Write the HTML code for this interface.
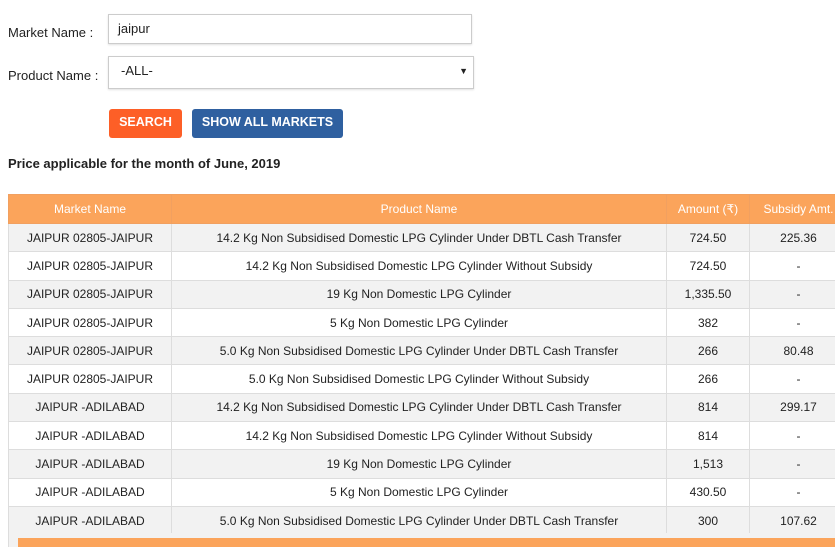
<!DOCTYPE html>
<html><head><meta charset="utf-8"><style>
body{margin:0;background:#fff;font-family:"Liberation Sans",sans-serif;color:#222;width:835px;height:547px;overflow:hidden;position:relative}
.lbl{position:absolute;left:8px;font-size:13px}
.inp{position:absolute;left:108px;width:364px;height:30px;border:1px solid #ccc;box-shadow:0 1px 2px rgba(0,0,0,.12);font-size:13px;box-sizing:border-box;padding-left:9px;line-height:28px}
.btn{position:absolute;top:109px;height:29px;border-radius:3px;color:#fff;font-weight:bold;font-size:12.5px;line-height:26px;text-align:center}
table{position:absolute;left:8px;top:194px;border-collapse:collapse;font-size:12px;width:840px}
th{background:#fba45b;color:#fff;font-weight:normal;height:28px;border:1px solid #f1a060;padding:0}
td{height:27.3px;border:1px solid #ddd;text-align:center;padding:0;color:#222}
tr:nth-child(even) td{background:#f2f2f2}
</style></head><body>
<div class="lbl" style="top:25px">Market Name :</div>
<div class="inp" style="top:14px">jaipur</div>
<div class="lbl" style="top:68px">Product Name :</div>
<div class="inp" style="top:56px;width:366px;height:33px;line-height:28px;padding-left:12px">-ALL-<span style="position:absolute;right:5px;font-size:9px">▼</span></div>
<div class="btn" style="left:109px;width:73px;background:#fd5f27">SEARCH</div>
<div class="btn" style="left:192px;width:151px;background:#2f60a0">SHOW ALL MARKETS</div>
<div style="position:absolute;left:8px;top:156px;font-size:13px;font-weight:bold;color:#222">Price applicable for the month of June, 2019</div>
<table>
<tr><th style="width:162px">Market Name</th><th style="width:494px">Product Name</th><th style="width:82px">Amount (₹)</th><th>Subsidy Amt.</th></tr>
<tr><td>JAIPUR 02805-JAIPUR</td><td>14.2 Kg Non Subsidised Domestic LPG Cylinder Under DBTL Cash Transfer</td><td>724.50</td><td>225.36</td></tr>
<tr><td>JAIPUR 02805-JAIPUR</td><td>14.2 Kg Non Subsidised Domestic LPG Cylinder Without Subsidy</td><td>724.50</td><td>-</td></tr>
<tr><td>JAIPUR 02805-JAIPUR</td><td>19 Kg Non Domestic LPG Cylinder</td><td>1,335.50</td><td>-</td></tr>
<tr><td>JAIPUR 02805-JAIPUR</td><td>5 Kg Non Domestic LPG Cylinder</td><td>382</td><td>-</td></tr>
<tr><td>JAIPUR 02805-JAIPUR</td><td>5.0 Kg Non Subsidised Domestic LPG Cylinder Under DBTL Cash Transfer</td><td>266</td><td>80.48</td></tr>
<tr><td>JAIPUR 02805-JAIPUR</td><td>5.0 Kg Non Subsidised Domestic LPG Cylinder Without Subsidy</td><td>266</td><td>-</td></tr>
<tr><td>JAIPUR -ADILABAD</td><td>14.2 Kg Non Subsidised Domestic LPG Cylinder Under DBTL Cash Transfer</td><td>814</td><td>299.17</td></tr>
<tr><td>JAIPUR -ADILABAD</td><td>14.2 Kg Non Subsidised Domestic LPG Cylinder Without Subsidy</td><td>814</td><td>-</td></tr>
<tr><td>JAIPUR -ADILABAD</td><td>19 Kg Non Domestic LPG Cylinder</td><td>1,513</td><td>-</td></tr>
<tr><td>JAIPUR -ADILABAD</td><td>5 Kg Non Domestic LPG Cylinder</td><td>430.50</td><td>-</td></tr>
<tr><td>JAIPUR -ADILABAD</td><td>5.0 Kg Non Subsidised Domestic LPG Cylinder Under DBTL Cash Transfer</td><td>300</td><td>107.62</td></tr>
</table>
<div style="position:absolute;left:8px;top:533px;width:830px;height:14px;background:#f2f2f2;border-left:1px solid #ddd"></div>
<div style="position:absolute;left:18px;top:538px;width:820px;height:9px;background:#fba45b"></div>
</body></html>
